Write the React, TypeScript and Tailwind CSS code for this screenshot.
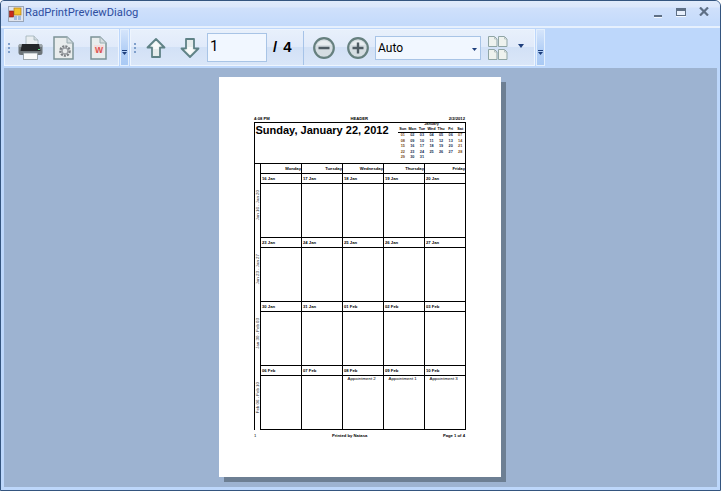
const dayNames = ['Monday', 'Tuesday', 'Wednesday', 'Thursday', 'Friday']

const weeks = [
  { label: 'Jan 16 - Jan 20', dates: ['16 Jan', '17 Jan', '18 Jan', '19 Jan', '20 Jan'], h: 'h-[54px]', notes: [] as string[] },
  { label: 'Jan 23 - Jan 27', dates: ['23 Jan', '24 Jan', '25 Jan', '26 Jan', '27 Jan'], h: 'h-[54px]', notes: [] as string[] },
  { label: 'Jan 30 - Feb 03', dates: ['30 Jan', '31 Jan', '01 Feb', '02 Feb', '03 Feb'], h: 'h-[54px]', notes: [] as string[] },
  { label: 'Feb 06 - Feb 10', dates: ['06 Feb', '07 Feb', '08 Feb', '09 Feb', '10 Feb'], h: 'h-[55px]', notes: ['', '', 'Appointment 2', 'Appointment 1', 'Appointment 3'] },
]

const miniHead = ['Sun', 'Mon', 'Tue', 'Wed', 'Thu', 'Fri', 'Sat']
const miniRows = [
  ['01', '02', '03', '04', '05', '06', '07'],
  ['08', '09', '10', '11', '12', '13', '14'],
  ['15', '16', '17', '18', '19', '20', '21'],
  ['22', '23', '24', '25', '26', '27', '28'],
  ['29', '30', '31', '', '', '', ''],
]

function Grip() {
  return (
    <div className="flex flex-col gap-[2px] w-[2px] shrink-0">
      <span className="w-[2px] h-[2px] bg-[#7f9fcb]" />
      <span className="w-[2px] h-[2px] bg-[#7f9fcb]" />
      <span className="w-[2px] h-[2px] bg-[#7f9fcb]" />
    </div>
  )
}

function Overflow() {
  return (
    <div className="w-[9px] h-[37px] bg-[linear-gradient(to_bottom,#d5e5fb,#b4d0f6_55%,#a9c9f4)] border border-[#e3effd] flex flex-col items-center justify-end gap-[1px] pb-[10px]">
      <span className="w-[5px] h-[1px] bg-[#1e3f7c]" />
      <svg width="5" height="3" viewBox="0 0 5 3"><path d="M0 0h5L2.5 3z" fill="#1e3f7c" /></svg>
    </div>
  )
}

function PrinterIcon() {
  return (
    <svg width="25" height="25" viewBox="0 0 25 25" className="shrink-0">
      <path d="M8 1h8l4 4v7H8z" fill="#e9eef1" stroke="#a0b0b8" strokeWidth="0.8" />
      <path d="M16 1v4h4" fill="#cfd9de" stroke="#a0b0b8" strokeWidth="0.8" />
      <rect x="0.5" y="9" width="24" height="11" rx="2.5" fill="#6d7579" />
      <rect x="0.5" y="9" width="24" height="3" rx="1.5" fill="#9ca5a9" />
      <path d="M4 9h17l1.5 7h-20z" fill="#24272a" />
      <rect x="20" y="14" width="2" height="1" fill="#5ad07a" />
      <rect x="5.5" y="18" width="14" height="6.5" fill="#f8fafa" stroke="#89969c" strokeWidth="0.8" />
    </svg>
  )
}

function PageIcon({ w = 22, children }: { w?: number; children?: React.ReactNode }) {
  return (
    <svg width={w} height="24" viewBox={`0 0 ${w} 24`} className="shrink-0">
      <path d={`M1 1h${w - 9}l6 6v16h-${w - 3}z`} fill="#e9eded" stroke="#7c9397" strokeWidth="1.5" />
      <path d={`M${w - 8} 1v6h6`} fill="#d5dde0" stroke="#9aacb0" strokeWidth="1" />
      {children}
    </svg>
  )
}

function ArrowIcon({ down }: { down?: boolean }) {
  return (
    <svg width="20" height="22" viewBox="0 0 20 22" className="shrink-0">
      <g transform={down ? 'rotate(180 10 11)' : undefined}>
        <path d="M10 2 18.5 10.5H14V20H6V10.5H1.5z" fill="#e6ecec" stroke="#5f8286" strokeWidth="1.8" strokeLinejoin="round" />
        <path d="M10 4.5 15 9.5H12.5V12H7.5V9.5H5z" fill="#f8fafa" />
      </g>
    </svg>
  )
}

function ZoomIcon({ plus }: { plus?: boolean }) {
  return (
    <svg width="22" height="22" viewBox="0 0 22 22" className="shrink-0">
      <circle cx="11" cy="11" r="9.8" fill="#d5dde2" stroke="#66807f" strokeWidth="2.2" />
      <path d="M4 8a8 8 0 0 1 14 0z" fill="#e8edf0" />
      <path d={plus ? 'M5.5 11h11M11 5.5v11' : 'M5.5 11h11'} stroke="#4f5c64" strokeWidth="2.4" />
    </svg>
  )
}

function MiniPage() {
  return (
    <svg width="10" height="11" viewBox="0 0 10 11">
      <path d="M.5.5h6L9 3v7.5H.5z" fill="#eef2ee" stroke="#8fa5a5" strokeWidth="1" />
      <path d="M6.5.5V3H9" fill="none" stroke="#a8b8b8" strokeWidth=".8" />
    </svg>
  )
}

function Calendar() {
  return (
    <div className="w-[212px] border border-black border-b-0 border-r-0">
      <div className="flex h-[40px] border-r border-black">
        <div className="flex-1 font-bold text-[11px] leading-[13px] pl-[0.5px] pt-[0.5px] text-black whitespace-nowrap">Sunday, January 22, 2012</div>
        <div className="w-[67px] text-[3.8px] leading-[5.5px] text-black mt-[-1px]">
          <div className="text-center font-bold h-[5px]">January</div>
          <div className="grid grid-cols-7 font-bold border-b border-black h-[6px] text-center">
            {miniHead.map(d => <span key={d}>{d}</span>)}
          </div>
          {miniRows.map((row, i) => (
            <div key={i} className="grid grid-cols-7 text-center font-bold h-[5.6px]">
              {row.map((c, j) => <span key={j} className={j === 0 || j === 6 ? 'text-[#7a4a10]' : 'text-[#102a50]'}>{c}</span>)}
            </div>
          ))}
        </div>
      </div>
      <div className="flex">
        <div className="w-[6px] border-t border-r border-black" />
        <div className="flex-1 grid grid-cols-5 h-[10px] border-t border-black">
          {dayNames.map(d => (
            <div key={d} className="border-r border-black text-right text-[4.2px] leading-[9px] font-bold text-black">{d}</div>
          ))}
        </div>
      </div>
      {weeks.map((w, i) => (
        <div key={w.label} className="flex">
          <div className="w-[6px] border-r border-black flex items-center justify-center overflow-hidden">
            <span className="[writing-mode:vertical-rl] rotate-180 whitespace-nowrap text-[4.4px] leading-[5px] text-[#222]">{w.label}</span>
          </div>
          <div className="flex-1">
            <div className="grid grid-cols-5 h-[10px] border-t border-black">
              {w.dates.map(d => (
                <div key={d} className="border-r border-black text-[4.2px] leading-[9px] font-bold pl-[1px] text-black">{d}</div>
              ))}
            </div>
            <div className={`grid grid-cols-5 ${w.h} border-t border-black ${i === 3 ? 'border-b' : ''}`}>
              {w.dates.map((d, j) => (
                <div key={d} className="border-r border-black text-[4.4px] leading-[6px] pl-[4.5px] text-black whitespace-nowrap">{w.notes[j]}</div>
              ))}
            </div>
          </div>
        </div>
      ))}
    </div>
  )
}

export default function App() {
  return (
    <div className="w-[721px] h-[491px] bg-[#bdd7fb] border border-[#34557f] rounded-tr-[6px] rounded-tl-[4px] overflow-hidden flex flex-col font-['Liberation_Sans',Arial,sans-serif]">
      {/* title bar */}
      <div className="h-[27px] shrink-0 flex items-center bg-[linear-gradient(to_bottom,#e0ebfb_0,#dbe7fb_6px,#cfe0fb_7px,#c3dafb_100%)] border-b-2 border-[#e6f0fd] pl-[7px] pr-[10px]">
        <svg width="16" height="16" viewBox="0 0 16 16" className="mr-[1px]">
          <rect x="0.5" y="0.5" width="15" height="15" fill="#dfe4ee" stroke="#9aa6b8" />
          <rect x="6" y="2" width="7" height="7" fill="#f1c22d" stroke="#b57b12" strokeWidth=".7" />
          <rect x="1.5" y="5" width="4" height="6" fill="#c92a1c" stroke="#7a1a10" strokeWidth=".6" />
          <rect x="6" y="10" width="3" height="4" fill="#a4bce0" />
          <rect x="10" y="10" width="3" height="4" fill="#a4bce0" />
        </svg>
        <span className="font-['Roboto',sans-serif] text-[11.2px] text-[#2f4fa0]">RadPrintPreviewDialog</span>
        <div className="ml-auto flex items-start h-[14px] mr-[1px]">
          <svg width="8" height="3" viewBox="0 0 8 3" className="mt-[8px]"><rect width="8" height="2" fill="#5e6f85" /><rect y="2" width="8" height="1" fill="#f2f7fe" /></svg>
          <svg width="10" height="9" viewBox="0 0 10 9" className="ml-[14px] mt-[1px]"><rect x=".5" y=".5" width="9" height="7" fill="#e8f0fc" stroke="#5e6f85" /><rect x="1" y="1" width="8" height="2" fill="#5e6f85" /><rect y="8" width="10" height="1" fill="#f2f7fe" /></svg>
          <svg width="10" height="9" viewBox="0 0 10 9" className="ml-[13px] mt-[0px]"><path d="M1 .5 9 8.5M9 .5 1 8.5" stroke="#5e6f85" strokeWidth="2.2" /></svg>
        </div>
      </div>

      {/* toolbar */}
      <div className="h-[40px] shrink-0 flex items-center pl-[3px] pb-[1px]">
        <div className="w-[115px] h-[37px] flex items-center pl-[3px] bg-[linear-gradient(to_bottom,#e8f0fb,#e0eafa_50%,#d2e1f6_50%,#dae6f8)] border border-[#eef5fe]">
          <Grip />
          <div className="ml-[8px]"><PrinterIcon /></div>
          <div className="ml-[10px]"><PageIcon>
            <circle cx="12" cy="15" r="4.5" fill="none" stroke="#7c8084" strokeWidth="2.6" strokeDasharray="2 1" />
            <circle cx="12" cy="15" r="3" fill="none" stroke="#9da1a5" strokeWidth="1.4" />
          </PageIcon></div>
          <div className="ml-[15px]"><PageIcon w={18}>
            <rect x="4" y="9" width="10" height="8" fill="#f5dcdc" />
            <text x="9" y="16.5" textAnchor="middle" fontSize="8.5" fontWeight="700" fill="#d9534f" fontFamily="Liberation Sans">W</text>
          </PageIcon></div>
        </div>
        <div className="ml-[1px]"><Overflow /></div>
        <div className="ml-[1px] w-[405px] h-[37px] flex items-center pl-[3px] bg-[linear-gradient(to_bottom,#e8f0fb,#e0eafa_50%,#d2e1f6_50%,#dae6f8)] border border-[#eef5fe]">
          <Grip />
          <div className="ml-[10px]"><ArrowIcon /></div>
          <div className="ml-[14px]"><ArrowIcon down /></div>
          <div className="ml-[7px] w-[60px] h-[29px] bg-[#f1f7ff] border border-[#a8c4e6] text-[15px] leading-[25px] font-['Roboto',sans-serif] pl-[2px] text-black">1</div>
          <div className="ml-[6px] w-[24px] font-bold text-[15px] tracking-[1px] text-black whitespace-nowrap">/ 4</div>
          <div className="ml-[6px] w-[1px] h-[34px] bg-[#a6c3e8]" />
          <div className="ml-[9px]"><ZoomIcon /></div>
          <div className="ml-[12px]"><ZoomIcon plus /></div>
          <div className="ml-[6px] w-[106px] h-[24px] bg-[#f1f7ff] border border-[#a8c4e6] flex items-center pl-[2px] pr-[3px] text-[12px] font-['Roboto',sans-serif] text-black">
            Auto
            <svg width="5" height="3" viewBox="0 0 5 3" className="ml-auto mt-[3px]"><path d="M0 0h5L2.5 3z" fill="#1e3f7c" /></svg>
          </div>
          <div className="ml-[7px] grid grid-cols-2 gap-y-[2px]">
            <MiniPage /><MiniPage /><MiniPage /><MiniPage />
          </div>
          <svg width="6" height="4" viewBox="0 0 6 4" className="ml-[10px] -mt-[4px]"><path d="M0 0h6L3 4z" fill="#1e3f7c" /></svg>
        </div>
        <div className="ml-[1px]"><Overflow /></div>
      </div>

      {/* preview area */}
      <div className="flex-1 mx-[3px] mb-[3px] bg-[#9db3d1] pt-[9px] pl-[215px]">
        <div className="w-[282px] h-[400px] bg-white shadow-[5px_5px_0_#6d7f93] pt-[38px] pl-[35px] flex flex-col">
          <div className="flex w-[212px] justify-between text-[4.2px] leading-[7px] font-bold text-black">
            <span>4:08 PM</span><span>HEADER</span><span className="pr-[1px]">2/2/2012</span>
          </div>
          <Calendar />
          <div className="flex w-[212px] justify-between text-[4.2px] leading-[6px] font-bold text-black mt-[3px]">
            <span className="font-normal">1</span><span>Printed by Natasa</span><span className="pr-[1px]">Page 1 of 4</span>
          </div>
        </div>
      </div>
    </div>
  )
}
